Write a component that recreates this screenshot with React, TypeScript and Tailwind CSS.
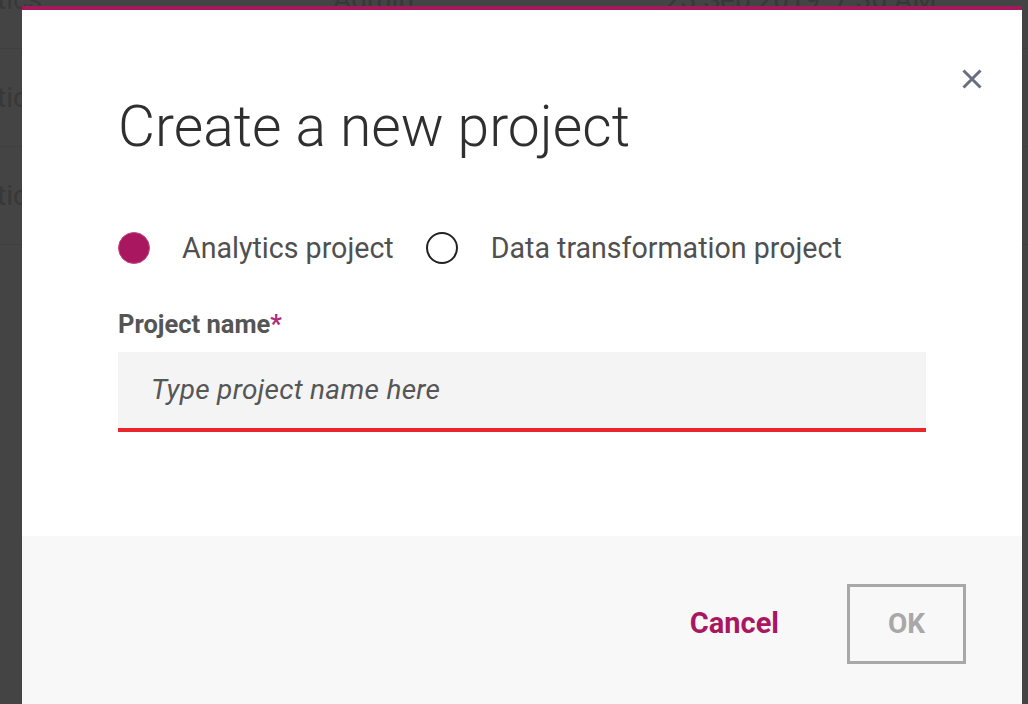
import React from "react";

const rows = [
  { a: "Analytics", b: "Admin", c: "23 Sep 2019, 7:36 AM" },
  { a: "Analytics", b: "Admin", c: "23 Sep 2019, 7:36 AM" },
  { a: "Analytics", b: "Admin", c: "23 Sep 2019, 7:36 AM" },
];

export default function App() {
  return (
    <div
      className="relative w-[1028px] h-[704px] overflow-hidden bg-[#444444]"
      style={{ fontFamily: "Roboto, 'Liberation Sans', sans-serif" }}
    >
      {/* background table */}
      <div className="flex flex-col mt-[-49px]">
        {rows.map((r, i) => (
          <div
            key={i}
            className="flex items-center h-[98px] border-b border-[#3f3f3f] text-[28px] text-[#383838] shrink-0"
          >
            <div className="w-[333px] ml-[-72px] shrink-0">{r.a}</div>
            <div className="w-[332px] ml-[72px] shrink-0">{r.b}</div>
            <div>{r.c}</div>
          </div>
        ))}
      </div>

      {/* modal */}
      <div className="absolute left-[22px] top-[6px] w-[1000px] h-[720px] flex flex-col bg-white">
        <div className="h-[4px] bg-[#a2195c] shrink-0" />
        <div className="relative h-[526px] shrink-0 flex flex-col px-[96px] pt-[85px]">
          <button className="absolute left-[940px] top-[59px] w-[20px] h-[20px] flex items-center justify-center">
            <svg width="20" height="20" viewBox="0 0 20 20">
              <path
                d="M1.5 1.5 L18.5 18.5 M18.5 1.5 L1.5 18.5"
                stroke="#686e80"
                strokeWidth="3"
                strokeLinecap="butt"
              />
            </svg>
          </button>
          <h1 className="text-[57px] leading-[64px] font-light text-[#2f2f2f]">
            Create a new project
          </h1>
          <div className="flex items-center h-[40px] mt-[69px] text-[28.6px] text-[#505050]">
            <span className="w-[32px] h-[32px] rounded-full bg-[#a8175f] border border-[#c04a85] shrink-0" />
            <span className="ml-[32px]">Analytics project</span>
            <span className="ml-[32px] w-[32px] h-[32px] rounded-full border-2 border-[#222] shrink-0" />
            <span className="ml-[33px]">Data transformation project</span>
          </div>
          <div className="mt-[41px] leading-[30px] text-[25.5px] font-bold text-[#555555]">
            Project name<span className="text-[#b02a7a]">*</span>
          </div>
          <div className="mt-[13px] w-[808px] h-[80px] bg-[#f4f4f4] border-b-4 border-[#e8262b] flex items-center pl-[33px]">
            <span className="italic text-[28px] tracking-[0.3px] text-[#565656]">Type project name here</span>
          </div>
        </div>
        <div className="flex-1 bg-[#f8f8f8] flex items-start justify-end pt-[48px] pr-[56px]">
          <div className="h-[80px] flex items-center text-[29px] font-bold text-[#a8175f] mr-[68px]">
            Cancel
          </div>
          <div className="w-[119px] h-[80px] border-[3px] border-[#a8a8a8] flex items-center justify-center text-[28px] font-bold text-[#a8a8a8]">
            OK
          </div>
        </div>
      </div>
    </div>
  );
}
